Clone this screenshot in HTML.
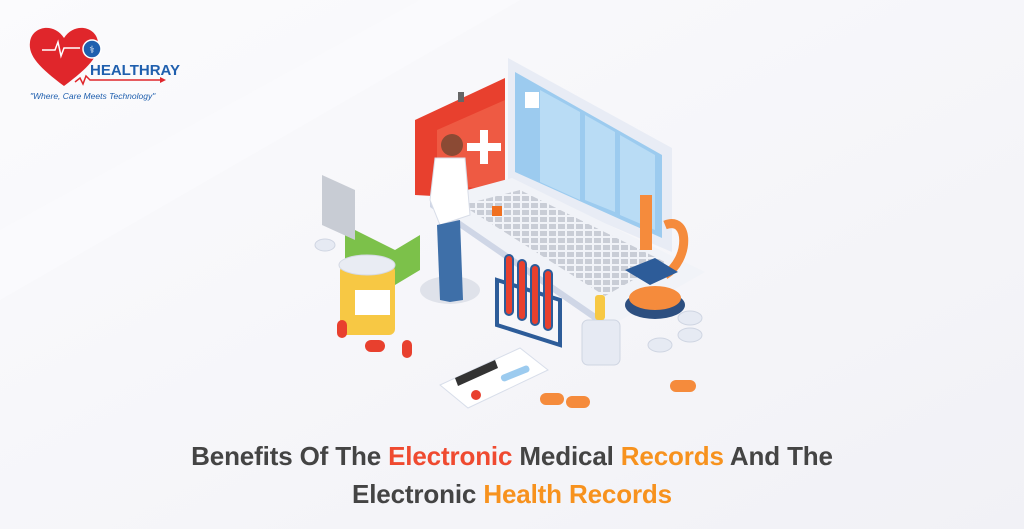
<!DOCTYPE html>
<html><head><meta charset="utf-8"><style>
html,body{margin:0;padding:0;width:1024px;height:529px;overflow:hidden;background:#f6f6fa;font-family:"Liberation Sans",sans-serif}
.t{position:absolute;left:0;width:1024px;text-align:center;font-weight:bold;font-size:26px;color:#444;letter-spacing:-0.15px}
.r{color:#ef4a30}.o{color:#f7921e}
</style></head><body>
<svg width="1024" height="529" style="position:absolute;left:0;top:0">
<defs><linearGradient id="bg" x1="0" y1="0" x2="1" y2="1"><stop offset="0" stop-color="#fbfbfd"/><stop offset="1" stop-color="#f1f1f6"/></linearGradient>
<pattern id="keys" width="9" height="7" patternUnits="userSpaceOnUse"><rect width="7" height="5" fill="#c9cdd6"/></pattern></defs>
<rect width="1024" height="529" fill="url(#bg)"/>
<polygon points="0,230 420,0 520,0 0,300" fill="#fbfbfd" opacity=".7"/>
<!-- logo -->
<path d="M64,86 C40,68 28,56 30,42 C32,26 54,22 64,38 C74,22 96,26 98,42 C100,56 88,68 64,86Z" fill="#e0262b"/>
<polyline points="42,50 55,50 58,42 61,56 64,48 80,48" fill="none" stroke="#fff" stroke-width="1.5"/>
<circle cx="92" cy="49" r="9" fill="#1f5fae" stroke="#fff" stroke-width="1.5"/>
<text x="92" y="53" font-size="10" fill="#fff" text-anchor="middle">⚕</text>
<text x="90" y="75" font-size="15" font-weight="bold" fill="#1f5fae" font-family="Liberation Sans">HEALTHRAY</text>
<polyline points="75,82 80,78 83,84 86,76 90,80 160,80" fill="none" stroke="#e0262b" stroke-width="1.5"/>
<polygon points="160,77 166,80 160,83" fill="#e0262b"/>
<text x="30" y="99" font-size="8.5" font-style="italic" fill="#1f5fae">"Where, Care Meets Technology"</text>
<!-- illustration -->
<ellipse cx="450" cy="290" rx="30" ry="14" fill="#dfe2ea"/>
<polygon points="415,120 505,78 505,200 415,195" fill="#e8402e"/>
<polygon points="437,130 505,100 505,190 437,185" fill="#ee5a43"/>
<rect x="480" y="130" width="8" height="34" fill="#fff"/><rect x="467" y="143" width="34" height="8" fill="#fff"/>
<rect x="458" y="92" width="6" height="10" fill="#666"/>
<polygon points="508,58 672,148 672,252 508,182" fill="#e8ecf5"/>
<polygon points="515,72 662,155 662,238 515,172" fill="#9ccbef"/>
<polygon points="540,90 580,112 580,200 540,182" fill="#b9dcf5"/>
<polygon points="585,115 615,132 615,212 585,200" fill="#b9dcf5"/>
<polygon points="620,135 655,155 655,230 620,215" fill="#b9dcf5"/>
<rect x="525" y="92" width="14" height="16" fill="#fff"/>
<polygon points="430,200 512,178 705,272 612,325" fill="#f1f3f8"/>
<polygon points="462,205 520,190 665,262 605,296" fill="url(#keys)"/>
<polygon points="430,200 612,325 612,333 430,207" fill="#cfd6e6"/>
<polygon points="345,225 395,250 420,235 420,270 395,285 345,260" fill="#7cc14a"/>
<polygon points="322,175 355,190 355,240 322,225" fill="#c8ccd4"/>
<circle cx="452" cy="145" r="11" fill="#8b4a34"/>
<polygon points="435,158 465,158 470,215 440,225 430,200" fill="#fff" stroke="#d8dde8"/>
<polygon points="437,225 460,220 463,300 450,302 440,300" fill="#3e6fa8"/>
<rect x="492" y="206" width="10" height="10" fill="#f07020"/>
<rect x="340" y="265" width="55" height="70" rx="6" fill="#f7c844"/>
<ellipse cx="367" cy="265" rx="28" ry="10" fill="#e9ecf3" stroke="#d4d9e4"/>
<rect x="355" y="290" width="35" height="25" fill="#fff"/>
<polygon points="497,280 560,300 560,345 497,325" fill="none" stroke="#2d5c99" stroke-width="4"/>
<rect x="505" y="255" width="8" height="60" rx="4" fill="#e8402e" stroke="#2d5c99" stroke-width="2"/>
<rect x="518" y="260" width="8" height="60" rx="4" fill="#e8402e" stroke="#2d5c99" stroke-width="2"/>
<rect x="531" y="265" width="8" height="60" rx="4" fill="#e8402e" stroke="#2d5c99" stroke-width="2"/>
<rect x="544" y="270" width="8" height="60" rx="4" fill="#e8402e" stroke="#2d5c99" stroke-width="2"/>
<ellipse cx="655" cy="305" rx="30" ry="14" fill="#2d4f80"/>
<ellipse cx="655" cy="298" rx="26" ry="12" fill="#f58b3c"/>
<path d="M665,225 C690,215 690,260 665,275" fill="none" stroke="#f58b3c" stroke-width="9"/>
<rect x="640" y="195" width="12" height="55" fill="#f58b3c"/>
<polygon points="625,270 655,258 678,272 650,285" fill="#2d5c99"/>
<rect x="582" y="320" width="38" height="45" rx="6" fill="#e6eaf3" stroke="#cfd5e2"/>
<rect x="595" y="295" width="10" height="25" rx="3" fill="#f7c844"/>
<polygon points="440,385 520,348 548,370 468,408" fill="#fff" stroke="#d8deea"/>
<polygon points="455,378 495,360 498,368 458,386" fill="#333"/>
<rect x="500" y="370" width="30" height="7" rx="3" fill="#9ccbef" transform="rotate(-22 515 373)"/>
<circle cx="476" cy="395" r="5" fill="#e8402e"/>
<rect x="337" y="320" width="10" height="18" rx="5" fill="#e8402e"/>
<rect x="402" y="340" width="10" height="18" rx="5" fill="#e8402e"/>
<rect x="365" y="340" width="20" height="12" rx="6" fill="#e8402e"/>
<rect x="540" y="393" width="24" height="12" rx="6" fill="#f58b3c"/>
<rect x="566" y="396" width="24" height="12" rx="6" fill="#f58b3c"/>
<rect x="670" y="380" width="26" height="12" rx="6" fill="#f58b3c"/>
<ellipse cx="660" cy="345" rx="12" ry="7" fill="#e6eaf3" stroke="#cfd5e2"/>
<ellipse cx="690" cy="335" rx="12" ry="7" fill="#e6eaf3" stroke="#cfd5e2"/>
<ellipse cx="690" cy="318" rx="12" ry="7" fill="#e6eaf3" stroke="#cfd5e2"/>
<ellipse cx="325" cy="245" rx="10" ry="6" fill="#e6eaf3" stroke="#cfd5e2"/>
</svg>
<div class="t" style="top:441px">Benefits Of The <span class="r">Electronic</span> Medical <span class="o">Records</span> And The</div>
<div class="t" style="top:479px">Electronic <span class="o">Health Records</span></div>
</body></html>
